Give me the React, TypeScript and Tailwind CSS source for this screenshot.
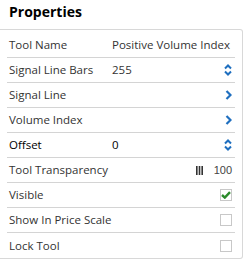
type Row = {
  label: string;
  value?: string;
  kind: "text" | "spin" | "arrow" | "slider" | "check";
  checked?: boolean;
};

const rows: Row[] = [
  { label: "Tool Name", value: "Positive Volume Index", kind: "text" },
  { label: "Signal Line Bars", value: "255", kind: "spin" },
  { label: "Signal Line", kind: "arrow" },
  { label: "Volume Index", kind: "arrow" },
  { label: "Offset", value: "0", kind: "spin" },
  { label: "Tool Transparency", kind: "slider" },
  { label: "Visible", kind: "check", checked: true },
  { label: "Show In Price Scale", kind: "check" },
  { label: "Lock Tool", kind: "check" },
];

function Spinner() {
  return (
    <svg width="8" height="12" viewBox="0 0 8 12" className="text-[#1f6fbf]">
      <path d="M1 4.5 L4 1.5 L7 4.5" fill="none" stroke="currentColor" strokeWidth="2" />
      <path d="M1 7.5 L4 10.5 L7 7.5" fill="none" stroke="currentColor" strokeWidth="2" />
    </svg>
  );
}

function Arrow() {
  return (
    <svg width="7" height="10" viewBox="0 0 7 10" className="text-[#1f6fbf]">
      <path d="M1.5 1 L5.5 5 L1.5 9" fill="none" stroke="currentColor" strokeWidth="2.2" />
    </svg>
  );
}

function Bars() {
  return (
    <svg width="7" height="9" viewBox="0 0 7 9" className="text-[#333]">
      <rect x="0" y="0" width="1.6" height="9" fill="currentColor" />
      <rect x="2.7" y="0" width="1.6" height="9" fill="currentColor" />
      <rect x="5.4" y="0" width="1.6" height="9" fill="currentColor" />
    </svg>
  );
}

function Box({ checked }: { checked?: boolean }) {
  return (
    <div className="w-3 h-3 border border-[#c8c8c8] bg-white flex items-center justify-center">
      {checked && (
        <svg width="10" height="8" viewBox="0 0 10 8">
          <path d="M1 4 L3.8 6.6 L9 1.2" fill="none" stroke="#2b8a2b" strokeWidth="2.4" />
        </svg>
      )}
    </div>
  );
}

export default function App() {
  return (
    <div className="w-[248px] h-[263px] bg-white font-['Open_Sans',sans-serif] text-[#333]">
      <h2 className="h-[29px] pl-[9px] pt-[2px] text-[14px] font-bold text-black leading-5">Properties</h2>
      <div className="w-[243px] border-y border-r border-[#d8d8d8] rounded-r-[3px] px-[7px] pt-[3px]">
        {rows.map((r, i) => (
          <div
            key={r.label}
            className={`h-[25px] flex items-center pl-[2px] pr-[3px] text-[11.5px] ${i < rows.length - 1 ? "border-b border-[#d4d4d4]" : ""} ${r.label === "Offset" ? "text-black" : ""}`}
          >
            <span className="w-[103px] shrink-0 whitespace-nowrap">{r.label}</span>
            <span className="flex-1 whitespace-nowrap">{r.value}</span>
            {r.kind === "spin" && <Spinner />}
            {r.kind === "arrow" && <Arrow />}
            {r.kind === "slider" && (
              <span className="flex items-center gap-[11px]">
                <Bars />
                <span className="font-['Liberation_Sans',sans-serif] text-[11px] text-[#444]">100</span>
              </span>
            )}
            {r.kind === "check" && <Box checked={r.checked} />}
          </div>
        ))}
      </div>
    </div>
  );
}
